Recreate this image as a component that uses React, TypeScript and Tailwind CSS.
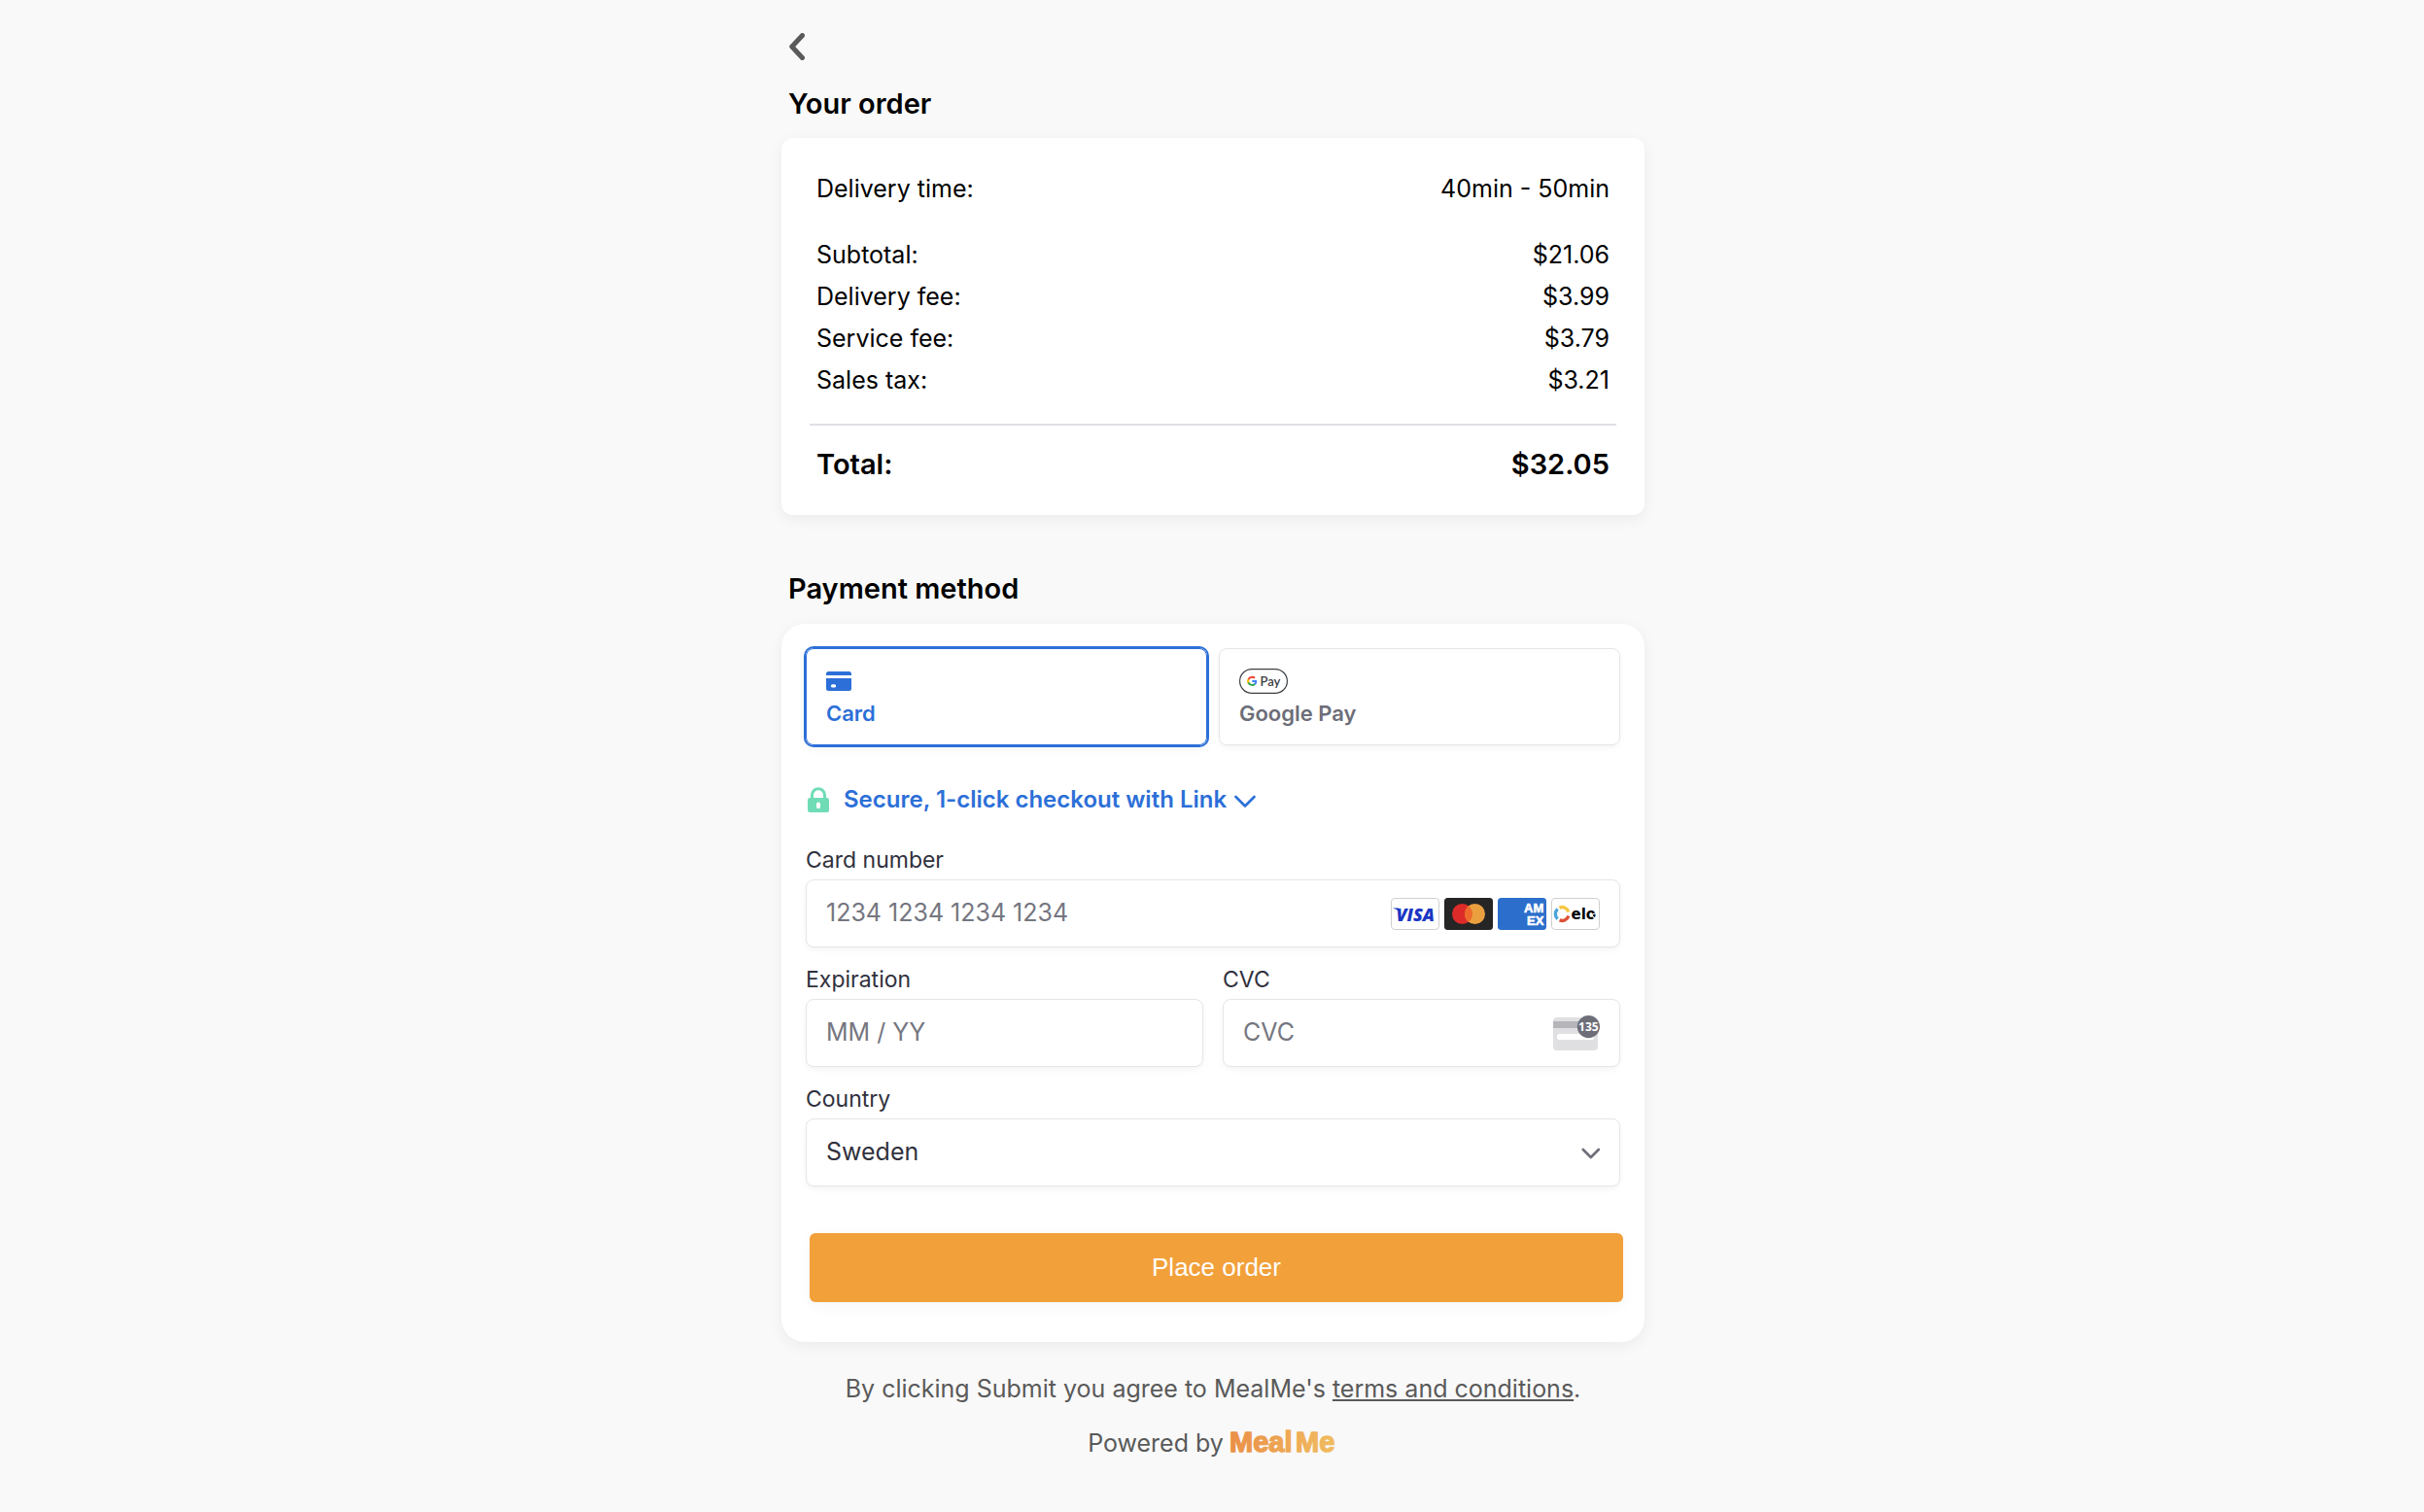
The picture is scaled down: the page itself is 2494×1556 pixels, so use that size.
import React from 'react';

const fees = [
  { label: "Subtotal:", value: "$21.06" },
  { label: "Delivery fee:", value: "$3.99" },
  { label: "Service fee:", value: "$3.79" },
  { label: "Sales tax:", value: "$3.21" }
];

const CardIcon: React.FC = () => (
  <svg width="26" height="20" viewBox="0 0 26 20" fill="#2c6fd8" aria-hidden="true">
    <path d="M2.5 0h21A2.5 2.5 0 0 1 26 2.5V4H0V2.5A2.5 2.5 0 0 1 2.5 0Z" />
    <path fillRule="evenodd" d="M0 7h26v10.5a2.5 2.5 0 0 1-2.5 2.5h-21A2.5 2.5 0 0 1 0 17.5ZM6.6 13.2a1.7 1.7 0 0 0 0 3.4h1.9a1.7 1.7 0 0 0 0-3.4Z" />
  </svg>
);

const GooglePayIcon: React.FC = () => (
  <svg width="50" height="26" viewBox="0 0 50 26" aria-hidden="true">
    <rect x="0.6" y="0.6" width="48.8" height="24.8" rx="12.4" fill="#fff" stroke="#3c4043" strokeWidth="1.2" />
    <g transform="translate(7.6 7.2) scale(0.47)">
      <path fill="#4285F4" d="M22.56 12.25c0-.78-.07-1.53-.2-2.25H12v4.26h5.92a5.06 5.06 0 0 1-2.2 3.32v2.77h3.57c2.08-1.92 3.27-4.74 3.27-8.1z" />
      <path fill="#34A853" d="M12 23c2.97 0 5.46-.98 7.28-2.66l-3.57-2.77c-.98.66-2.23 1.06-3.71 1.06-2.86 0-5.29-1.93-6.16-4.53H2.18v2.84A11 11 0 0 0 12 23z" />
      <path fill="#FBBC05" d="M5.84 14.1a6.6 6.6 0 0 1 0-4.2V7.06H2.18a11 11 0 0 0 0 9.88z" />
      <path fill="#EA4335" d="M12 5.38c1.62 0 3.06.56 4.21 1.64l3.15-3.15C17.45 2.09 14.97 1 12 1A11 11 0 0 0 2.18 7.06L5.84 9.9C6.71 7.31 9.14 5.38 12 5.38z" />
    </g>
    <text x="21.5" y="17.8" fontFamily="Lato, sans-serif" fontSize="13" fill="#3c4043">Pay</text>
  </svg>
);

const LockIcon: React.FC = () => (
  <svg width="22" height="26" viewBox="0 0 22 26" aria-hidden="true">
    <path d="M4.5 13V8.2a6.5 6.5 0 0 1 13 0V13" fill="none" stroke="#6fdcb5" strokeWidth="3" />
    <path fill="#6fdcb5" fillRule="evenodd" d="M2.5 11h17a2.5 2.5 0 0 1 2.5 2.5v10a2.5 2.5 0 0 1-2.5 2.5h-17A2.5 2.5 0 0 1 0 23.5v-10A2.5 2.5 0 0 1 2.5 11ZM11 15.6a2 2 0 0 0-2 2v2.6a2 2 0 0 0 4 0v-2.6a2 2 0 0 0-2-2Z" />
  </svg>
);

const VisaIcon: React.FC = () => (
  <svg width="50" height="33" viewBox="0 0 50 33" aria-label="Visa">
    <rect x="0.5" y="0.5" width="49" height="32" rx="3.5" fill="#fff" stroke="#cfcfcf" />
    <path d="M2.2 10.4h6l2.6 6.3C8.6 13.5 5.7 11.5 2.2 10.8Z" fill="#1a35c4" />
    <text x="5.5" y="23.5" fontFamily="'Open Sans', sans-serif" fontSize="18" fontWeight="800" fontStyle="italic" fill="#1a35c4">VISA</text>
  </svg>
);

const MastercardIcon: React.FC = () => (
  <svg width="50" height="33" viewBox="0 0 50 33" aria-label="Mastercard">
    <rect width="50" height="33" rx="3.5" fill="#252525" />
    <circle cx="18.5" cy="16.5" r="10.5" fill="#dc2b28" />
    <circle cx="31.5" cy="16.5" r="10.5" fill="#eba040" />
    <path d="M25 8.25a10.5 10.5 0 0 1 0 16.5a10.5 10.5 0 0 1 0-16.5Z" fill="#ed6a2c" />
  </svg>
);

const AmexIcon: React.FC = () => (
  <svg width="50" height="33" viewBox="0 0 50 33" aria-label="American Express">
    <defs>
      <clipPath id="amex-clip">
        <rect width="50" height="33" rx="3.5" />
      </clipPath>
    </defs>
    <g clipPath="url(#amex-clip)">
      <rect width="50" height="33" fill="#2c6ecb" />
      <g fontFamily="'Liberation Sans', sans-serif" fontSize="13" fontWeight="700" fill="#fff" stroke="#fff" strokeWidth="0.6">
        <text x="27" y="15">AM</text>
        <text x="30" y="28">EX</text>
      </g>
    </g>
  </svg>
);

const EloIcon: React.FC = () => (
  <svg width="50" height="33" viewBox="0 0 50 33" aria-label="Elo">
    <rect x="0.5" y="0.5" width="49" height="32" rx="3.5" fill="#fff" stroke="#cfcfcf" />
    <g fill="none" strokeWidth="3.4">
      <path d="M8.4 10.2A6.8 6.8 0 0 1 17.8 14.5" stroke="#f7c744" />
      <path d="M17.8 18.5A6.8 6.8 0 0 1 8.6 22.9" stroke="#dd5136" />
      <path d="M6.6 21.6A6.8 6.8 0 0 1 6.6 11.4" stroke="#4aa5dc" />
    </g>
    <text x="20.5" y="21.8" fontFamily="'DejaVu Sans', sans-serif" fontSize="15" fontWeight="700" fill="#000">elo</text>
    <path d="M41 17.5 48 15M41 17.5 46 22" stroke="#fff" strokeWidth="1.2" />
  </svg>
);

const CvcIcon: React.FC = () => (
  <svg width="48" height="36" viewBox="0 0 48 36" aria-hidden="true">
    <rect y="2" width="46" height="34" rx="4" fill="#e0e0e2" />
    <rect y="6" width="46" height="7" fill="#b5b5ba" />
    <rect x="4" y="19" width="38" height="6" rx="2" fill="#fff" />
    <circle cx="36.4" cy="11.6" r="11.6" fill="#6d6e78" />
    <text x="36.4" y="16" textAnchor="middle" fontFamily="'Noto Sans', sans-serif" fontSize="12" fontWeight="700" fill="#fff">135</text>
  </svg>
);

const MealMeLogo: React.FC = () => (
  <svg width="112" height="32" viewBox="0 0 112 32" aria-label="MealMe">
    <defs>
      <linearGradient id="mealme" x1="0" x2="109" y1="0" y2="0" gradientUnits="userSpaceOnUse">
        <stop offset="0" stopColor="#ea8f47" />
        <stop offset="1" stopColor="#f1bd61" />
      </linearGradient>
    </defs>
    <text fontFamily="'Liberation Sans', sans-serif" fontSize="29" fontWeight="700" fill="url(#mealme)" stroke="url(#mealme)" strokeWidth="1.4" strokeLinejoin="round">
      <tspan x="0" y="25">Meal</tspan>
      <tspan x="68" y="25">Me</tspan>
    </text>
  </svg>
);

const fieldBox = "flex h-[70px] items-center rounded-lg border border-[#e6e6e6] bg-white px-5 shadow-[0_2px_4px_rgba(0,0,0,0.03),0_4px_12px_rgba(0,0,0,0.02)]";
const fieldLabel = "block h-9 text-[23px] leading-[32px] text-[#30313d]";
const fieldInput = "min-w-0 flex-1 bg-transparent text-[25px] text-[#30313d] outline-none placeholder:text-[#757680]";

const App: React.FC = () => {
  return (
    <main className="min-h-screen bg-[#f9f9f9] pl-0.5 font-['Inter',sans-serif] text-black">
      <div className="mx-auto flex max-w-[888px] flex-col pb-10">
        <header className="px-2 pt-[34px]">
          <button type="button" aria-label="Back" className="block">
            <svg width="16" height="28" viewBox="0 0 16 28" fill="none" stroke="#5a5a5a" strokeWidth="5" strokeLinecap="round" strokeLinejoin="round">
              <path d="M13.5 2.5 2.8 14l10.7 11.5" />
            </svg>
          </button>
        </header>

        <h2 className="mt-[25px] px-[7px] text-[29px] leading-[40px] font-semibold">Your order</h2>
        <section className="mt-[15px] rounded-xl bg-white px-[29px] pt-8 pb-8 shadow-[0_4px_16px_rgba(0,0,0,0.06)]">
          <dl className="px-[7px] text-[25px] leading-[40px]">
            <div className="mb-7 flex justify-between">
              <dt>Delivery time:</dt>
              <dd>40min - 50min</dd>
            </div>
            {fees.map((fee) => (
              <div key={fee.label} className="mb-[3px] flex justify-between">
                <dt>{fee.label}</dt>
                <dd>{fee.value}</dd>
              </div>
            ))}
          </dl>
          <div className="mt-[25px] flex justify-between border-t-2 border-[#e0e0e6] px-[7px] pt-5 text-[29px] leading-[40px] font-semibold">
            <span>Total:</span>
            <span>$32.05</span>
          </div>
        </section>

        <h2 className="mt-14 px-[7px] text-[29px] leading-[40px] font-semibold">Payment method</h2>
        <form className="mt-4 rounded-3xl bg-white pt-[25px] pb-[41px] shadow-[0_4px_16px_rgba(0,0,0,0.06)]" onSubmit={(e) => e.preventDefault()}>
          <div className="px-[25px]">
            <div className="grid grid-cols-2 gap-3 text-[22px] leading-[32px] font-semibold">
              <button type="button" aria-pressed="true" className="flex h-[100px] flex-col rounded-lg border border-[#2c6fd8] px-5 pt-5 text-left text-[#2c6fd8] shadow-[0_4px_12px_rgba(0,0,0,0.04)] ring-2 ring-[#2c6fd8]">
                <span className="flex h-[26px] items-center"><CardIcon /></span>
                <span className="mt-1">Card</span>
              </button>
              <button type="button" aria-pressed="false" className="flex h-[100px] flex-col rounded-lg border border-[#e6e6e6] px-5 pt-5 text-left text-[#6d6e78] shadow-[0_2px_4px_rgba(0,0,0,0.03),0_4px_12px_rgba(0,0,0,0.02)]">
                <GooglePayIcon />
                <span className="mt-1">Google Pay</span>
              </button>
            </div>

            <button type="button" className="mt-9 flex items-center px-0.5 text-[24px] leading-[40px] font-semibold text-[#2c6fd8]">
              <LockIcon />
              <span className="ml-[15px]">Secure, 1-click checkout with Link</span>
              <svg className="mt-1 ml-2" width="22" height="14" viewBox="0 0 22 14" fill="none" stroke="#2c6fd8" strokeWidth="2.6" strokeLinecap="round" strokeLinejoin="round">
                <path d="M1.5 2 11 11.5 20.5 2" />
              </svg>
            </button>

            <div className="mt-[26px]">
              <label htmlFor="card-number" className={fieldLabel}>Card number</label>
              <div className={fieldBox}>
                <input id="card-number" inputMode="numeric" placeholder="1234 1234 1234 1234" className={fieldInput} />
                <div className="flex gap-[5px]">
                  <VisaIcon />
                  <MastercardIcon />
                  <AmexIcon />
                  <EloIcon />
                </div>
              </div>
            </div>

            <div className="mt-[17px] grid grid-cols-2 gap-5">
              <div>
                <label htmlFor="expiration" className={fieldLabel}>Expiration</label>
                <div className={fieldBox}>
                  <input id="expiration" placeholder="MM / YY" className={fieldInput} />
                </div>
              </div>
              <div>
                <label htmlFor="cvc" className={fieldLabel}>CVC</label>
                <div className={fieldBox}>
                  <input id="cvc" placeholder="CVC" className={fieldInput} />
                  <CvcIcon />
                </div>
              </div>
            </div>

            <div className="mt-[17px]">
              <label htmlFor="country" className={fieldLabel}>Country</label>
              <div className="relative">
                <select id="country" defaultValue="Sweden" className="h-[70px] w-full appearance-none rounded-lg border border-[#e6e6e6] bg-white px-5 text-[25px] text-[#30313d] shadow-[0_2px_4px_rgba(0,0,0,0.03),0_4px_12px_rgba(0,0,0,0.02)]">
                  <option>Sweden</option>
                </select>
                <svg className="pointer-events-none absolute top-7 right-5" width="20" height="14" viewBox="0 0 20 14" fill="none" stroke="#6d6e78" strokeWidth="2.6" strokeLinecap="round" strokeLinejoin="round">
                  <path d="M1.8 4 9.8 12 17.8 4" />
                </svg>
              </div>
            </div>
          </div>

          <div className="mt-12 pr-[22px] pl-[29px]">
            <button type="submit" className="h-[71px] w-full rounded-md bg-[#f2a03a] font-['Liberation_Sans',sans-serif] text-[26px] text-white shadow-[0_4px_16px_rgba(0,0,0,0.04)]">
              Place order
            </button>
          </div>
        </form>

        <footer className="mt-7 text-center text-[25px] leading-[40px] text-[#5a5a5a]">
          <p>
            By clicking Submit you agree to MealMe's <a href="#" className="underline">terms and conditions</a>.
          </p>
          <p className="mt-4 flex items-center justify-center gap-1.5">
            Powered by <MealMeLogo />
          </p>
        </footer>
      </div>
    </main>
  );
};

export default App;
